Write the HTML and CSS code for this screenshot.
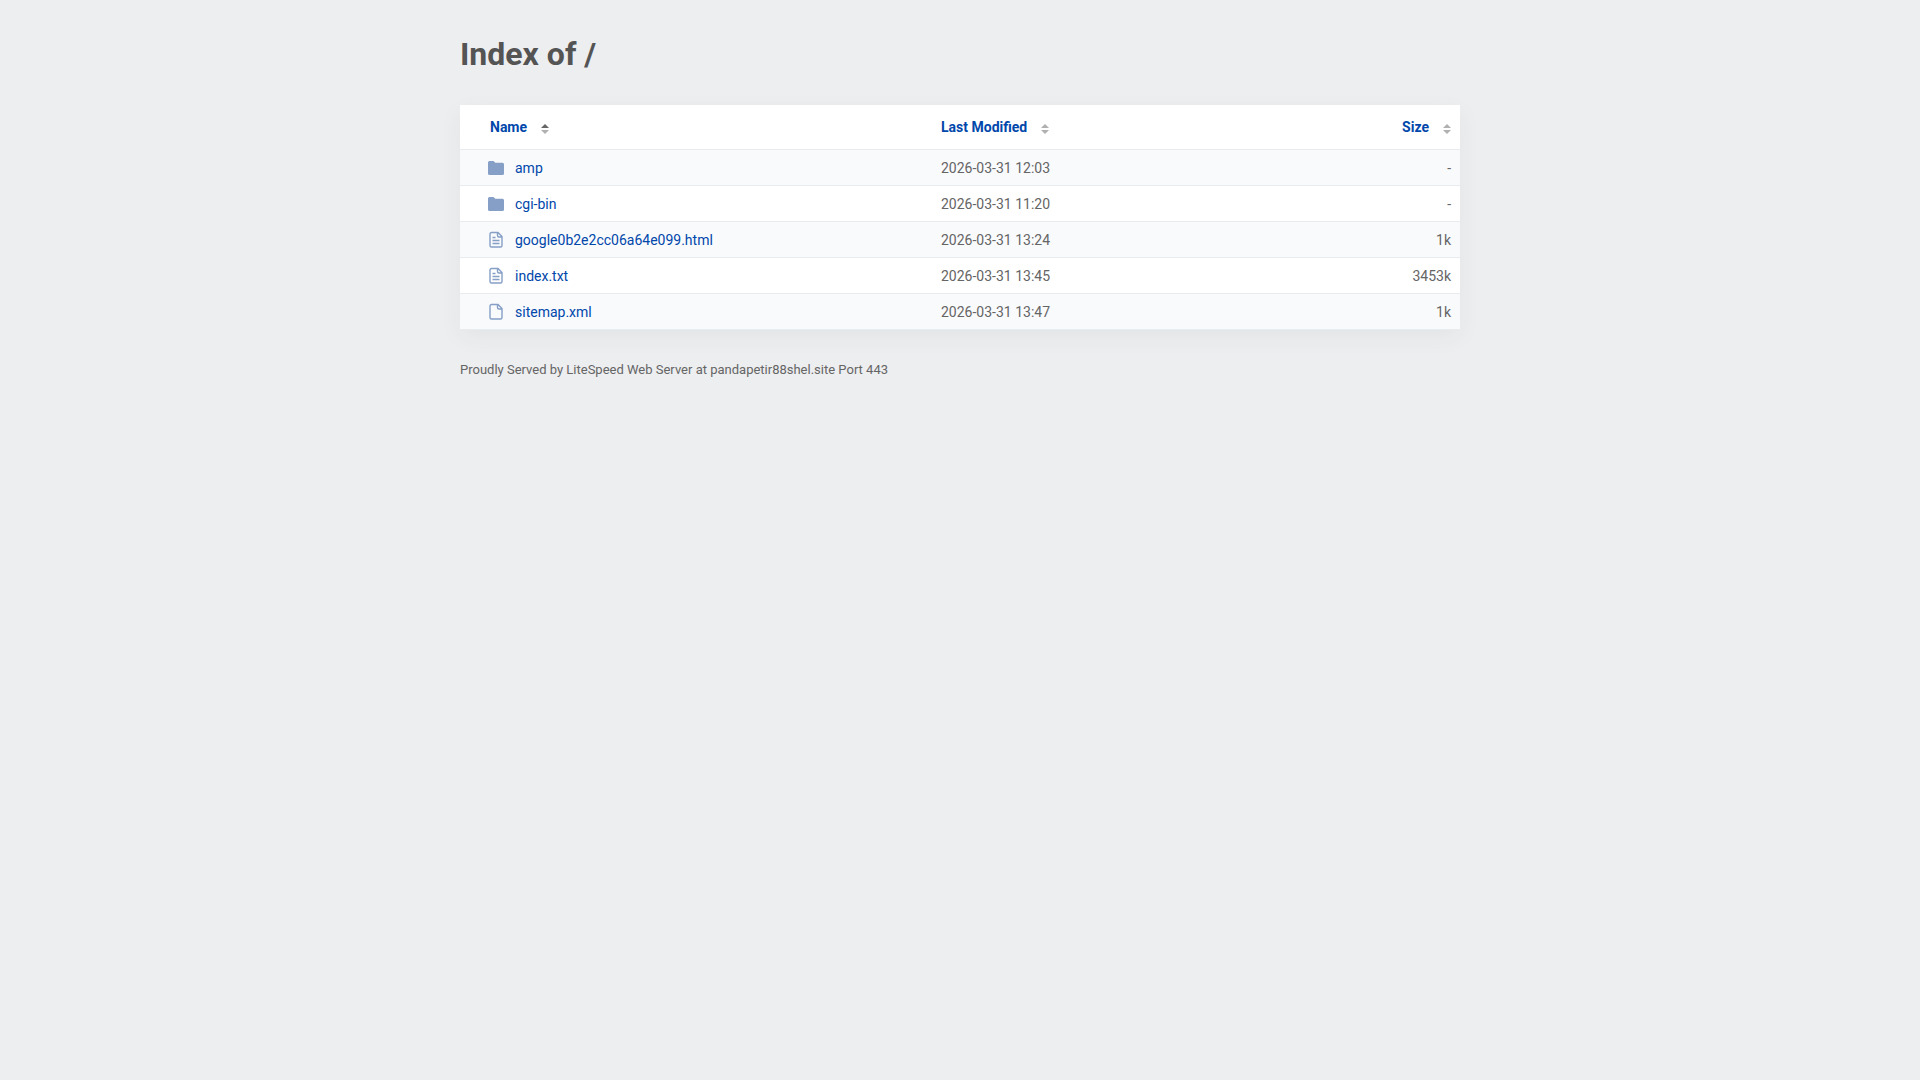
FILE: index.html
```html
<!DOCTYPE html>
<html lang="en">

<head>
    <meta charset="UTF-8">
    <meta name="viewport" content="width=device-width, initial-scale=1.0">
    <title>Index of /</title>
    <link rel="stylesheet" href="styles.css">
</head>

<body>

    <!-- Icons shared by the rows -->
    <svg class="icon-defs" aria-hidden="true">
        <symbol id="icon-folder" viewBox="0 0 18 18">
            <path d="M2.500 2H6.500L8.300 3.700H15.500a1.500 1.500 0 0 1 1.500 1.500v9.300a1.500 1.500 0 0 1-1.500 1.500H2.500a1.500 1.500 0 0 1-1.500-1.500V3.500a1.500 1.500 0 0 1 1.500-1.500z" fill="#869fc6"/>
        </symbol>
        <symbol id="icon-file" viewBox="0 0 18 18">
            <path d="M4.500 1.500h6.500l4 4v9a1.500 1.500 0 0 1-1.500 1.500h-9A1.500 1.500 0 0 1 3 14.500V3a1.500 1.500 0 0 1 1.500-1.500zM10.500 1.500v3a1.500 1.500 0 0 0 1.500 1.500h3" fill="none" stroke="#869fc6" stroke-width="1.400"/>
        </symbol>
        <symbol id="icon-text" viewBox="0 0 18 18">
            <use href="#icon-file"/>
            <path d="M5.500 6.500h3M5.500 9.500h7M5.500 12.500h7" fill="none" stroke="#869fc6" stroke-width="1.400"/>
        </symbol>
        <symbol id="icon-sort" viewBox="0 0 8 10">
            <path class="sort-up" d="M0 4l4-4 4 4z"/>
            <path class="sort-down" d="M0 6h8l-4 4z"/>
        </symbol>
    </svg>

    <div class="content">
        <h1>Index of /</h1>

        <table class="listing">
            <thead>
                <tr>
                    <th class="col-name" aria-sort="ascending"><a class="sort-link sort-asc" href="#">Name<svg class="sort-icon"><use href="#icon-sort"/></svg></a></th>
                    <th class="col-date"><a class="sort-link" href="#">Last Modified<svg class="sort-icon"><use href="#icon-sort"/></svg></a></th>
                    <th class="col-size"><a class="sort-link" href="#">Size<svg class="sort-icon"><use href="#icon-sort"/></svg></a></th>
                </tr>
            </thead>
            <tbody>
                <tr>
                    <td class="col-name"><a class="file-link" href="#"><svg class="icon"><use href="#icon-folder"/></svg>amp</a></td>
                    <td>2026-03-31 12:03</td>
                    <td class="col-size">-</td>
                </tr>
                <tr>
                    <td class="col-name"><a class="file-link" href="#"><svg class="icon"><use href="#icon-folder"/></svg>cgi-bin</a></td>
                    <td>2026-03-31 11:20</td>
                    <td class="col-size">-</td>
                </tr>
                <tr>
                    <td class="col-name"><a class="file-link" href="#"><svg class="icon"><use href="#icon-text"/></svg>google0b2e2cc06a64e099.html</a></td>
                    <td>2026-03-31 13:24</td>
                    <td class="col-size">1k</td>
                </tr>
                <tr>
                    <td class="col-name"><a class="file-link" href="#"><svg class="icon"><use href="#icon-text"/></svg>index.txt</a></td>
                    <td>2026-03-31 13:45</td>
                    <td class="col-size">3453k</td>
                </tr>
                <tr>
                    <td class="col-name"><a class="file-link" href="#"><svg class="icon"><use href="#icon-file"/></svg>sitemap.xml</a></td>
                    <td>2026-03-31 13:47</td>
                    <td class="col-size">1k</td>
                </tr>
            </tbody>
        </table>

        <footer>Proudly Served by LiteSpeed Web Server at pandapetir88shel.site Port 443</footer>
    </div>

</body>

</html>
```

FILE: styles.css
```css
body {
    margin: 0;
    background-color: #edeef0;
    color: #656565;
    font-family: Roboto, "Liberation Sans", sans-serif;
    font-size: 14px;
    line-height: 20px;
}

a {
    color: #0047ab;
    text-decoration: none;
}

a:hover {
    text-decoration: underline;
}

.icon-defs {
    display: none;
}

.content {
    max-width: 1000px;
    margin: 0 auto;
    padding: 34px 20px;
}

h1 {
    margin: 0 0 31px;
    color: #545454;
    font-size: 32px;
    font-weight: 700;
    line-height: 40px;
}

/* File listing */
.listing {
    width: 100%;
    border-spacing: 0;
    background-color: #fff;
    box-shadow: 0 7px 22px rgba(0, 50, 55, 0.05);
}

th,
td {
    padding: 8px 9px 7px;
    border-bottom: 1px solid #e9ecef;
    text-align: left;
}

th {
    padding: 12px 9px;
    font-weight: 700;
}

tbody tr:nth-child(odd) {
    background-color: #f9fafc;
}

.col-name {
    width: 433px;
    padding-left: 27px;
}

th.col-name {
    padding-left: 30px;
}

.col-size {
    text-align: right;
}

.sort-link,
.file-link {
    display: inline-flex;
    align-items: center;
}

.file-link {
    display: flex;
    gap: 10px;
}

.icon {
    width: 18px;
    height: 18px;
}

.sort-icon {
    width: 8px;
    height: 10px;
    margin: 3px 0 0 14px;
    fill: #b0b0b0;
}

.sort-asc .sort-icon {
    --up: #666;
}

.sort-up {
    fill: var(--up, #b0b0b0);
}

footer {
    margin-top: 30px;
    font-size: 13px;
}
```
